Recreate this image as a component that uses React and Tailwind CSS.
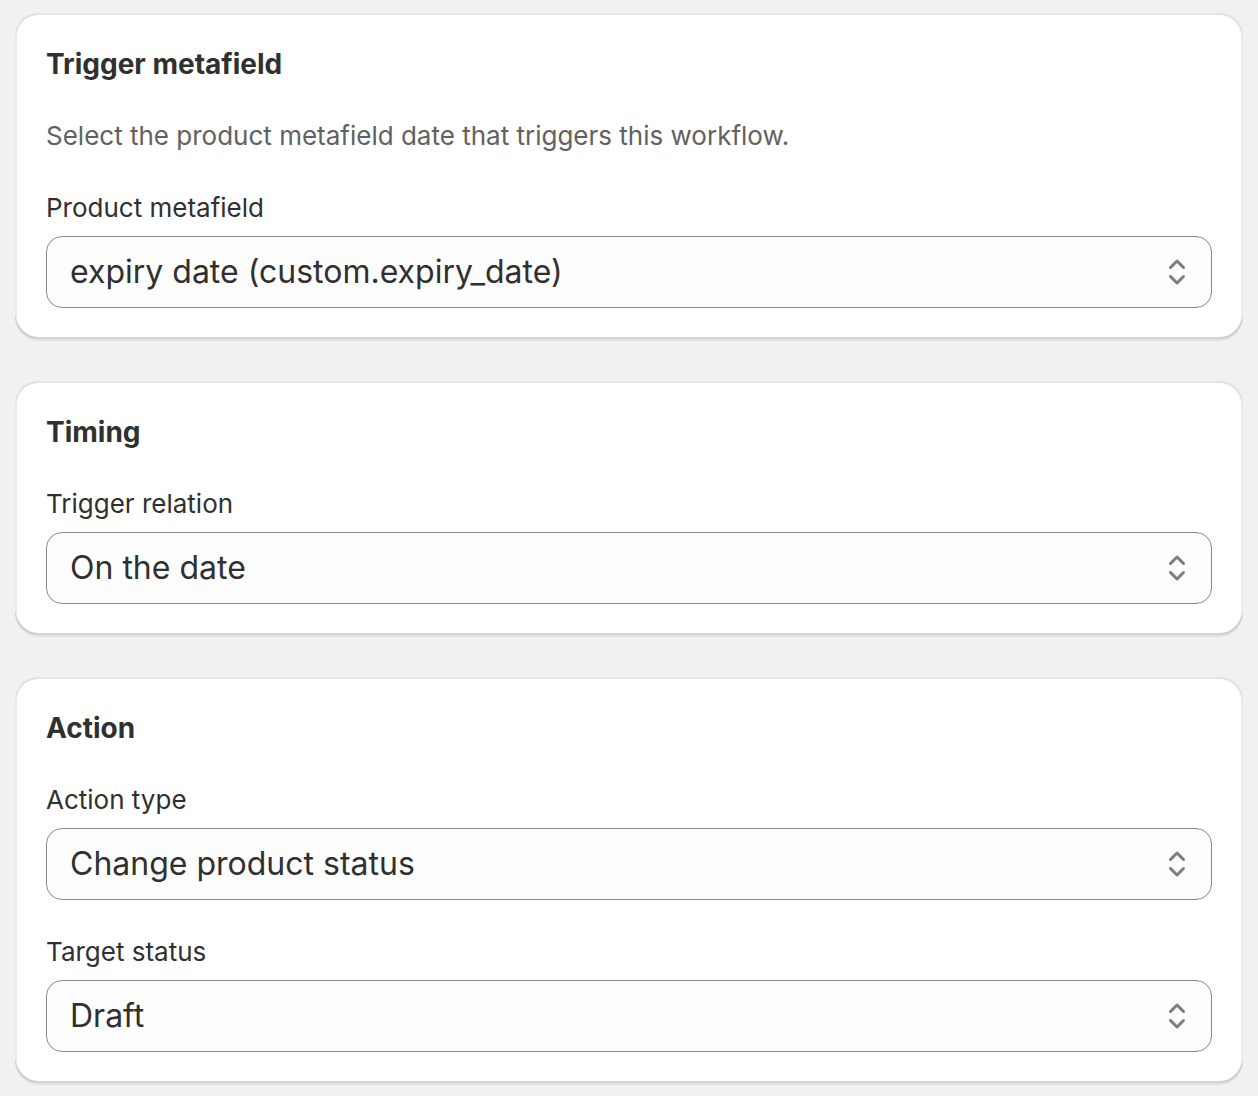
import React from "react";

const cardShadow =
  "shadow-[0_2px_0_0_rgba(26,26,26,0.07),inset_0_2px_0_0_rgba(204,204,204,0.5),inset_0_-2px_0_0_rgba(0,0,0,0.17),inset_2px_0_0_0_rgba(0,0,0,0.08),inset_-2px_0_0_0_rgba(0,0,0,0.08)]";

// up/down chevrons on the right of each select
function SelectIcon() {
  return (
    <svg width="20" height="28" viewBox="0 0 20 28" fill="none" className="shrink-0">
      <path
        d="M3.5 9.5 10 3l6.5 6.5"
        stroke="#7d7d7d"
        strokeWidth="3"
        strokeLinecap="round"
        strokeLinejoin="round"
      />
      <path
        d="M3.5 18.5 10 25l6.5-6.5"
        stroke="#7d7d7d"
        strokeWidth="3"
        strokeLinecap="round"
        strokeLinejoin="round"
      />
    </svg>
  );
}

function Field({ label, value }) {
  return (
    <div className="flex flex-col gap-2">
      <label className="text-[26px] leading-[40px] text-[#303030]">{label}</label>
      <div className="h-[72px] rounded-2xl border border-[#8a8a8a] bg-[#fdfdfd] pl-[23px] pr-[24px] flex items-center justify-between">
        <span className="text-[32px] leading-[40px] text-[#303030]">{value}</span>
        <SelectIcon />
      </div>
    </div>
  );
}

function Card({ title, children }) {
  return (
    <section className={`bg-white rounded-3xl px-[31px] pt-[31px] pb-[31px] ${cardShadow}`}>
      <div className="flex flex-col gap-8">
        <h2 className="text-[28px] leading-[40px] font-bold text-[#303030]">{title}</h2>
        {children}
      </div>
    </section>
  );
}

export default function App() {
  return (
    <div
      className="min-h-[1096px] bg-[#f1f1f1] px-[15px] pt-[13px] pb-4 flex flex-col gap-[42px]"
      style={{ fontFamily: "Inter, 'Noto Sans', sans-serif" }}
    >
      <Card title="Trigger metafield">
        <p className="text-[26px] leading-[40px] text-[#616161]">
          Select the product metafield date that triggers this workflow.
        </p>
        <Field label="Product metafield" value="expiry date (custom.expiry_date)" />
      </Card>

      <Card title="Timing">
        <Field label="Trigger relation" value="On the date" />
      </Card>

      <Card title="Action">
        <Field label="Action type" value="Change product status" />
        <Field label="Target status" value="Draft" />
      </Card>
    </div>
  );
}
